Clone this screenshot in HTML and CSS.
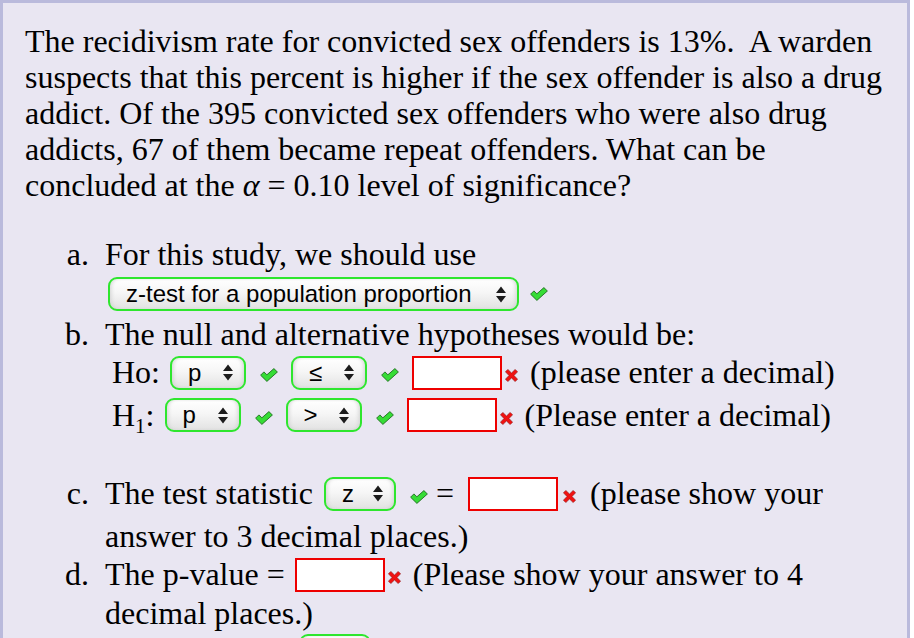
FILE: index.html
```html
<!DOCTYPE html>
<html lang="en">
<head>
    <meta charset="UTF-8">
    <title>Problem</title>
    <link rel="stylesheet" href="styles.css">
</head>
<body>

<div class="problem">
    <p class="question">The recidivism rate for convicted sex offenders is 13%.&nbsp; A warden suspects that this percent is higher if the sex offender is also a drug addict. Of the 395 convicted sex offenders who were also drug addicts, 67 of them became repeat offenders. What can be concluded at the <i class="alpha">&alpha;</i> = 0.10 level of significance?</p>

    <ol class="parts">
        <li>
            For this study, we should use
            <div class="pick-row">
                <span class="pick pick-wide">z-test for a population proportion<svg class="arrows" width="10" height="17" viewBox="0 0 10 17"><path d="M0 7 L5 0.5 L10 7 Z M0 10 L5 16.5 L10 10 Z"/></svg></span>
                <svg class="ok" width="18" height="14" viewBox="0 0 18 14"><path d="M0.6 7.2 L3.9 3.9 L6.9 6.8 L13.9 0.6 L17.4 4 L6.9 13.4 Z"/></svg>
            </div>
        </li>
        <li>
            The null and alternative hypotheses would be:
            <div class="hyp">
                Ho: <span class="pick pick-small">p<svg class="arrows" width="10" height="17" viewBox="0 0 10 17"><path d="M0 7 L5 0.5 L10 7 Z M0 10 L5 16.5 L10 10 Z"/></svg></span>
                <svg class="ok" width="18" height="14" viewBox="0 0 18 14"><path d="M0.6 7.2 L3.9 3.9 L6.9 6.8 L13.9 0.6 L17.4 4 L6.9 13.4 Z"/></svg>
                <span class="pick pick-small">&le;<svg class="arrows" width="10" height="17" viewBox="0 0 10 17"><path d="M0 7 L5 0.5 L10 7 Z M0 10 L5 16.5 L10 10 Z"/></svg></span>
                <svg class="ok" width="18" height="14" viewBox="0 0 18 14"><path d="M0.6 7.2 L3.9 3.9 L6.9 6.8 L13.9 0.6 L17.4 4 L6.9 13.4 Z"/></svg>
                <input class="answer" type="text"><svg class="bad" width="13" height="13" viewBox="0 0 13 13"><path d="M2.8 0.4 L6.5 4 L10.2 0.4 L12.6 2.8 L9 6.5 L12.6 10.2 L10.2 12.6 L6.5 9 L2.8 12.6 L0.4 10.2 L4 6.5 L0.4 2.8 Z"/></svg>
                (please enter a decimal)
            </div>
            <div class="hyp">
                H<sub>1</sub>: <span class="pick pick-small">p<svg class="arrows" width="10" height="17" viewBox="0 0 10 17"><path d="M0 7 L5 0.5 L10 7 Z M0 10 L5 16.5 L10 10 Z"/></svg></span>
                <svg class="ok" width="18" height="14" viewBox="0 0 18 14"><path d="M0.6 7.2 L3.9 3.9 L6.9 6.8 L13.9 0.6 L17.4 4 L6.9 13.4 Z"/></svg>
                <span class="pick pick-small">&gt;<svg class="arrows" width="10" height="17" viewBox="0 0 10 17"><path d="M0 7 L5 0.5 L10 7 Z M0 10 L5 16.5 L10 10 Z"/></svg></span>
                <svg class="ok" width="18" height="14" viewBox="0 0 18 14"><path d="M0.6 7.2 L3.9 3.9 L6.9 6.8 L13.9 0.6 L17.4 4 L6.9 13.4 Z"/></svg>
                <input class="answer" type="text"><svg class="bad" width="13" height="13" viewBox="0 0 13 13"><path d="M2.8 0.4 L6.5 4 L10.2 0.4 L12.6 2.8 L9 6.5 L12.6 10.2 L10.2 12.6 L6.5 9 L2.8 12.6 L0.4 10.2 L4 6.5 L0.4 2.8 Z"/></svg>
                (Please enter a decimal)
            </div>
        </li>
        <li class="gap">
            The test statistic <span class="pick pick-tiny">z<svg class="arrows" width="10" height="17" viewBox="0 0 10 17"><path d="M0 7 L5 0.5 L10 7 Z M0 10 L5 16.5 L10 10 Z"/></svg></span>
            <svg class="ok ok-eq" width="18" height="14" viewBox="0 0 18 14"><path d="M0.6 7.2 L3.9 3.9 L6.9 6.8 L13.9 0.6 L17.4 4 L6.9 13.4 Z"/></svg><span class="eq">=</span>
            <input class="answer answer-stat" type="text"><svg class="bad bad-wide" width="13" height="13" viewBox="0 0 13 13"><path d="M2.8 0.4 L6.5 4 L10.2 0.4 L12.6 2.8 L9 6.5 L12.6 10.2 L10.2 12.6 L6.5 9 L2.8 12.6 L0.4 10.2 L4 6.5 L0.4 2.8 Z"/></svg>
            (please show your answer to 3 decimal places.)
        </li>
        <li>
            The p-value =
            <input class="answer answer-tight" type="text"><svg class="bad" width="13" height="13" viewBox="0 0 13 13"><path d="M2.8 0.4 L6.5 4 L10.2 0.4 L12.6 2.8 L9 6.5 L12.6 10.2 L10.2 12.6 L6.5 9 L2.8 12.6 L0.4 10.2 L4 6.5 L0.4 2.8 Z"/></svg>
            (Please show your answer to 4 decimal places.)
        </li>
        <li>
            The p-value is <span class="pick pick-tiny">&gt;<svg class="arrows" width="10" height="17" viewBox="0 0 10 17"><path d="M0 7 L5 0.5 L10 7 Z M0 10 L5 16.5 L10 10 Z"/></svg></span> <i>&alpha;</i>
        </li>
    </ol>
</div>

</body>
</html>
```

FILE: styles.css
```css
body {
    margin: 0;
    padding: 0;
    background-color: #fff;
    font-family: "Liberation Serif", "Times New Roman", serif;
    font-size: 32px;
    color: #000;
}
.problem {
    width: 910px;
    height: 720px;
    box-sizing: border-box;
    background-color: #e9e6f2;
    border: 3px solid #babadc;
    border-bottom: none;
    padding: 20px 14px 0 22px;
}
.question {
    margin: 0 0 32px 0;
    line-height: 36px;
}
.alpha {
    font-style: italic;
}
.parts {
    list-style-type: lower-alpha;
    margin: 0;
    padding-left: 80px;
    line-height: 38px;
}
.parts li::marker {
    content: counter(list-item, lower-alpha) ".\00a0\00a0";
}
.parts li.gap {
    margin-top: 36px;
}
.pick-row {
    display: flex;
    align-items: center;
    gap: 11px;
    margin: 4px 0 4px 3px;
}
.hyp {
    padding-left: 7px;
}
.hyp sub {
    font-size: 21px;
    line-height: 0;
}
.pick {
    display: inline-flex;
    align-items: center;
    justify-content: space-between;
    box-sizing: border-box;
    height: 34px;
    padding: 0 11px 0 16px;
    border: 2px solid #2ee62e;
    border-radius: 9px;
    background: linear-gradient(to bottom, #ffffff, #f6f6f6 45%, #e2e2e2);
    box-shadow: inset 3px 0 4px -2px #d0d0d0, inset -3px 0 4px -2px #d0d0d0;
    font-family: "Liberation Sans", Arial, sans-serif;
    font-size: 24px;
    line-height: 1;
    vertical-align: middle;
    margin-bottom: 6px;
}
.pick-wide {
    width: 411px;
    margin: 0;
}
.pick-small {
    width: 76px;
    margin-left: 2px;
}
.pick-tiny {
    width: 72px;
    margin-left: 3px;
}
.arrows {
    fill: #1c1c1c;
    flex: none;
}
.ok {
    fill: #36dc36;
    stroke: #236b23;
    stroke-width: 0.9;
    margin: 0 3px 0 6px;
    vertical-align: 1px;
}
.pick-row .ok {
    margin: 0;
}
.ok-eq {
    margin-right: 6px;
    vertical-align: 0;
}
.eq {
    margin-left: 2px;
}
.answer {
    box-sizing: border-box;
    width: 90px;
    height: 34px;
    border: 2px solid #ee0000;
    border-radius: 0;
    background: #fff;
    margin: 0 0 6px 2px;
    padding: 0;
    vertical-align: middle;
    outline: none;
}
.answer-stat {
    margin-left: 6px;
}
.answer-tight {
    margin: -4px 0 2px 2px;
}
.bad {
    fill: #f01212;
    stroke: #8a1c1c;
    stroke-width: 0.6;
    margin: 0 4px 0 3px;
    vertical-align: 1px;
}
.bad-wide {
    margin: 0 6px 0 5px;
}
```
